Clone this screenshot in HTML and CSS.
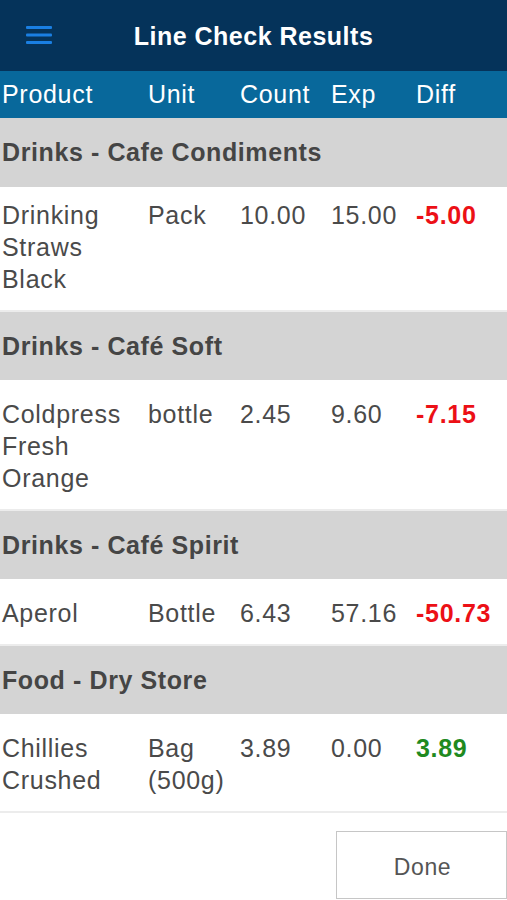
FILE: index.html
```html
<!DOCTYPE html>
<html lang="en">
<head>
    <meta charset="UTF-8">
    <meta name="viewport" content="width=device-width, initial-scale=1.0">
    <title>Line Check Results</title>
    <link rel="stylesheet" href="styles.css">
</head>
<body>
    <div class="navbar">
        <button class="menu-button" aria-label="Menu">
            <svg width="26" height="20" viewBox="0 0 26 20">
                <rect x="0" y="1" width="26" height="3" rx="1" fill="#1a7fe2"/>
                <rect x="0" y="8.5" width="26" height="3" rx="1" fill="#1a7fe2"/>
                <rect x="0" y="16" width="26" height="3" rx="1" fill="#1a7fe2"/>
            </svg>
        </button>
        <h1>Line Check Results</h1>
    </div>

    <div class="columns">
        <span class="col product">Product</span>
        <span class="col unit">Unit</span>
        <span class="col count">Count</span>
        <span class="col exp">Exp</span>
        <span class="col diff">Diff</span>
    </div>

    <div class="section">Drinks - Cafe Condiments</div>
    <div class="row first">
        <span class="col product">Drinking Straws Black</span>
        <span class="col unit">Pack</span>
        <span class="col count">10.00</span>
        <span class="col exp">15.00</span>
        <span class="col diff negative">-5.00</span>
    </div>

    <div class="section">Drinks - Café Soft</div>
    <div class="row">
        <span class="col product">Coldpress Fresh Orange</span>
        <span class="col unit">bottle</span>
        <span class="col count">2.45</span>
        <span class="col exp">9.60</span>
        <span class="col diff negative">-7.15</span>
    </div>

    <div class="section">Drinks - Café Spirit</div>
    <div class="row">
        <span class="col product">Aperol</span>
        <span class="col unit">Bottle</span>
        <span class="col count">6.43</span>
        <span class="col exp">57.16</span>
        <span class="col diff negative">-50.73</span>
    </div>

    <div class="section">Food - Dry Store</div>
    <div class="row last">
        <span class="col product">Chillies Crushed</span>
        <span class="col unit">Bag (500g)</span>
        <span class="col count">3.89</span>
        <span class="col exp">0.00</span>
        <span class="col diff positive">3.89</span>
    </div>

    <div class="footer">
        <button class="done-button">Done</button>
    </div>
</body>
</html>
```

FILE: styles.css
```css
body {
    margin: 0;
    font-family: "Liberation Sans", Arial, sans-serif;
    background-color: #ffffff;
    color: #454545;
}

.navbar {
    height: 71px;
    background-color: #05335a;
    display: flex;
    align-items: center;
    justify-content: center;
    position: relative;
}

.navbar h1 {
    margin: 2px 0 0;
    font-size: 25px;
    font-weight: bold;
    letter-spacing: 0.5px;
    color: #ffffff;
}

.menu-button {
    position: absolute;
    left: 26px;
    top: 25px;
    padding: 0;
    border: none;
    background: none;
    line-height: 0;
}

.columns {
    height: 47px;
    background-color: #08689b;
    display: flex;
    align-items: center;
    color: #ffffff;
    font-size: 25px;
    letter-spacing: 0.7px;
}

.col {
    padding-left: 2px;
    box-sizing: border-box;
}

.product {
    width: 146px;
}

.unit {
    width: 92px;
}

.count {
    width: 91px;
}

.exp {
    width: 85px;
}

.diff {
    flex: 1;
}

.section {
    height: 68px;
    display: flex;
    align-items: center;
    padding-left: 2px;
    background-color: #d4d4d4;
    border-top: 2px solid #ececec;
    font-size: 25px;
    font-weight: bold;
    letter-spacing: 0.6px;
    color: #454545;
}

.columns + .section {
    border-top: none;
    height: 69px;
}

.row {
    display: flex;
    align-items: flex-start;
    padding: 18px 0 15px;
    font-size: 25px;
    line-height: 32px;
    letter-spacing: 0.7px;
    color: #4a4a4a;
}

.row.first {
    padding-top: 12px;
}

.row .product {
    padding-right: 4px;
}

.row.last {
    border-bottom: 2px solid #ececec;
}

.negative {
    color: #ec1016;
    font-weight: bold;
}

.positive {
    color: #1f8a1f;
    font-weight: bold;
}

.footer {
    display: flex;
    justify-content: flex-end;
    padding: 18px 0 0;
}

.done-button {
    width: 171px;
    height: 68px;
    padding: 5px 0 0 2px;
    background-color: #ffffff;
    border: 1px solid #c6c6c6;
    font-family: "Liberation Sans", Arial, sans-serif;
    font-size: 23px;
    letter-spacing: 0.6px;
    color: #555555;
    cursor: pointer;
}
```
